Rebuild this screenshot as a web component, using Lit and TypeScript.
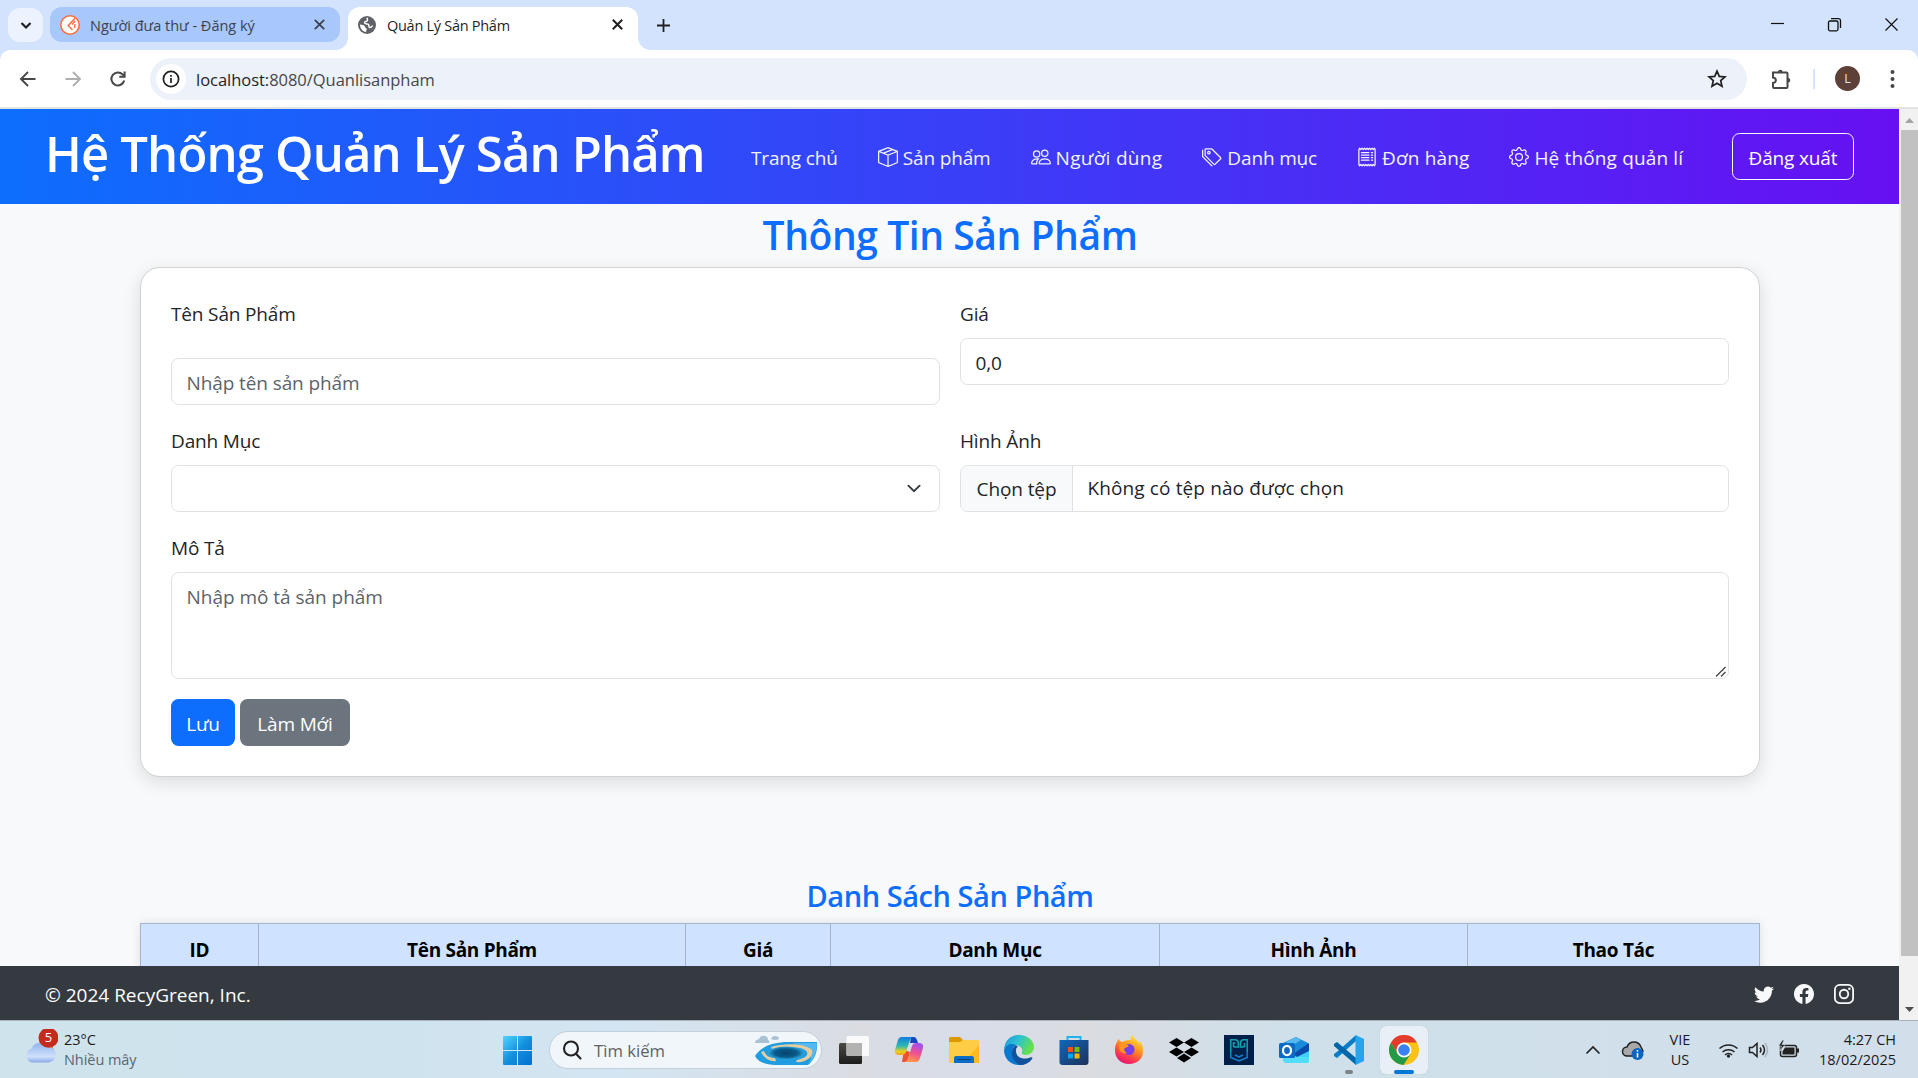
import { LitElement, html, css, svg } from "lit";
import { customElement } from "lit/decorators.js";
import { classMap } from "lit/directives/class-map.js";

const bi = (body: unknown) => html`<svg class="bi" viewBox="0 0 16 16" fill="currentColor">${body}</svg>`;

const icons = {
  box: bi(svg`<path d="M8.186 1.113a.5.5 0 0 0-.372 0L1.846 3.5l2.404.961L10.404 2l-2.218-.887zm3.564 1.426L5.596 5 8 5.961 14.154 3.5l-2.404-.961zm3.25 1.7-6.5 2.6v7.922l6.5-2.6V4.24zM7.5 14.762V6.838L1 4.239v7.923l6.5 2.6zM7.443.184a1.5 1.5 0 0 1 1.114 0l7.129 2.852A.5.5 0 0 1 16 3.5v8.662a1 1 0 0 1-.629.928l-7.185 2.874a.5.5 0 0 1-.372 0L.63 13.09a1 1 0 0 1-.63-.928V3.5a.5.5 0 0 1 .314-.464L7.443.184z"/>`),
  people: bi(svg`<path d="M15 14s1 0 1-1-1-4-5-4-5 3-5 4 1 1 1 1zm-7.978-1L7 12.996c.001-.264.167-1.03.76-1.72C8.312 10.629 9.282 10 11 10c1.717 0 2.687.63 3.24 1.276.593.69.758 1.457.76 1.72l-.008.002-.014.002zM11 7a2 2 0 1 0 0-4 2 2 0 0 0 0 4m3-2a3 3 0 1 1-6 0 3 3 0 0 1 6 0M6.936 9.28a6 6 0 0 0-1.23-.247A7 7 0 0 0 5 9c-4 0-5 3-5 4q0 1 1 1h4.216A2.24 2.24 0 0 1 5 13c0-1.01.377-2.042 1.09-2.904.243-.294.526-.569.846-.816M4.92 10A5.5 5.5 0 0 0 4 13H1c0-.26.164-1.03.76-1.724.545-.636 1.492-1.256 3.16-1.275ZM1.5 5.5a3 3 0 1 1 6 0 3 3 0 0 1-6 0m3-2a2 2 0 1 0 0 4 2 2 0 0 0 0-4"/>`),
  tags: bi(svg`<path d="M3 2v4.586l7 7L14.586 9l-7-7zM2 2a1 1 0 0 1 1-1h4.586a1 1 0 0 1 .707.293l7 7a1 1 0 0 1 0 1.414l-4.586 4.586a1 1 0 0 1-1.414 0l-7-7A1 1 0 0 1 2 6.586z"/><path d="M5.500 5a.5.5 0 1 1 0-1 .5.5 0 0 1 0 1m0 1a1.500 1.500 0 1 0 0-3 1.500 1.500 0 0 0 0 3M1 7.086a1 1 0 0 0 .293.707L8.750 15.250l-.043.043a1 1 0 0 1-1.414 0l-7-7A1 1 0 0 1 0 7.586V3a1 1 0 0 1 1-1z"/>`),
  receipt: bi(svg`<path d="M1.500 2 2 1l1 1 1-1 1 1 1-1 1 1 1-1 1 1 1-1 1 1 1-1 1 1 1-1 .5 1v12l-.5 1-1-1-1 1-1-1-1 1-1-1-1 1-1-1-1 1-1-1-1 1-1-1-1 1-.5-1z" fill="none" stroke="currentColor" stroke-linejoin="round"/><path d="M3.500 4.500h6m-6 2h6m-6 2h6m-6 2h6m2-6h1m-1 2h1m-1 2h1m-1 2h1" fill="none" stroke="currentColor" stroke-linecap="round"/>`),
  gear: bi(svg`<path d="M8 4.754a3.246 3.246 0 1 0 0 6.492 3.246 3.246 0 0 0 0-6.492M5.754 8a2.246 2.246 0 1 1 4.492 0 2.246 2.246 0 0 1-4.492 0"/><path d="M9.796 1.343c-.527-1.79-3.065-1.79-3.592 0l-.094.319a.873.873 0 0 1-1.255.52l-.292-.16c-1.64-.892-3.433.902-2.54 2.541l.159.292a.873.873 0 0 1-.52 1.255l-.319.094c-1.79.527-1.79 3.065 0 3.592l.319.094a.873.873 0 0 1 .52 1.255l-.16.292c-.892 1.64.901 3.434 2.541 2.54l.292-.159a.873.873 0 0 1 1.255.52l.094.319c.527 1.79 3.065 1.79 3.592 0l.094-.319a.873.873 0 0 1 1.255-.52l.292.16c1.64.893 3.434-.902 2.54-2.541l-.159-.292a.873.873 0 0 1 .52-1.255l.319-.094c1.79-.527 1.79-3.065 0-3.592l-.319-.094a.873.873 0 0 1-.52-1.255l.16-.292c.893-1.64-.902-3.433-2.541-2.54l-.292.159a.873.873 0 0 1-1.255-.52zm-2.633.283c.246-.835 1.428-.835 1.674 0l.094.319a1.873 1.873 0 0 0 2.693 1.115l.291-.16c.764-.415 1.6.42 1.184 1.185l-.159.292a1.873 1.873 0 0 0 1.116 2.692l.318.094c.835.246.835 1.428 0 1.674l-.319.094a1.873 1.873 0 0 0-1.115 2.693l.16.291c.415.764-.42 1.6-1.185 1.184l-.291-.159a1.873 1.873 0 0 0-2.693 1.116l-.094.318c-.246.835-1.428.835-1.674 0l-.094-.319a1.873 1.873 0 0 0-2.692-1.115l-.292.16c-.764.415-1.6-.42-1.184-1.185l.159-.291A1.873 1.873 0 0 0 1.945 8.93l-.319-.094c-.835-.246-.835-1.428 0-1.674l.319-.094A1.873 1.873 0 0 0 3.06 4.377l-.16-.292c-.415-.764.42-1.6 1.185-1.184l.292.159a1.873 1.873 0 0 0 2.692-1.115z"/>`),
  twitter: bi(svg`<path d="M5.026 15c6.038 0 9.341-5.003 9.341-9.334q.002-.211-.006-.422A6.7 6.7 0 0 0 16 3.542a6.7 6.7 0 0 1-1.889.518 3.3 3.3 0 0 0 1.447-1.817 6.5 6.5 0 0 1-2.087.793A3.286 3.286 0 0 0 7.875 6.03a9.32 9.32 0 0 1-6.767-3.429 3.29 3.29 0 0 0 1.018 4.382A3.3 3.3 0 0 1 .64 6.575v.045a3.29 3.29 0 0 0 2.632 3.218 3.2 3.2 0 0 1-.865.115 3 3 0 0 1-.614-.057 3.28 3.28 0 0 0 3.067 2.277A6.6 6.6 0 0 1 .78 13.58a6 6 0 0 1-.78-.045A9.34 9.34 0 0 0 5.026 15"/>`),
  facebook: bi(svg`<path d="M16 8.049c0-4.446-3.582-8.05-8-8.05C3.58 0-.002 3.603-.002 8.05c0 4.017 2.926 7.347 6.75 7.951v-5.625h-2.03V8.05H6.75V6.275c0-2.017 1.195-3.131 3.022-3.131.876 0 1.791.157 1.791.157v1.98h-1.009c-.993 0-1.303.621-1.303 1.258v1.51h2.218l-.354 2.326H9.25V16c3.824-.604 6.75-3.934 6.75-7.951"/>`),
  instagram: bi(svg`<g fill="none" stroke="currentColor" stroke-width="1.45"><rect x=".72" y=".72" width="14.56" height="14.56" rx="4"/><circle cx="8" cy="8" r="3.4"/></g><circle cx="12.3" cy="3.7" r="1"/>`),
};

@customElement("browser-chrome")
class BrowserChrome extends LitElement {
  static styles = css`
    :host { display: block; height: 109px; background: #d3e3fd; font-family: "Open Sans", "Noto Sans", sans-serif; color: #1f1f1f; box-sizing: border-box; }
    svg { display: block; flex: none; fill: none; stroke: currentColor; }
    .strip { display: flex; height: 50px; box-sizing: border-box; padding: 7px 20px 0 8px; }
    .search { width: 35px; height: 34px; margin-top: 1px; border-radius: 12px; background: #ecf3fe; display: grid; place-items: center; margin-right: 7px; }
    .tab { width: 290px; height: 35px; box-sizing: border-box; border-radius: 12px; display: flex; align-items: center; padding: 0 13px 0 10px; font-size: 14.5px; white-space: nowrap; }
    .tab .name { flex: 1; letter-spacing: 0; padding-top: 1px; }
    .idle { background: #a8c7fa; color: #3c4350; }
    .idle .name { margin-left: 10px; }
    .active { position: relative; margin-left: 8px; height: 43px; padding-bottom: 8px; background: #fff; border-radius: 12px 12px 0 0; }
    .active .name { margin-left: 11px; letter-spacing: -0.28px; }
    .active::before, .active::after { content: ""; position: absolute; bottom: 0; width: 12px; height: 12px; }
    .active::before { left: -12px; background: radial-gradient(circle at 0 0, transparent 11.5px, #fff 12px); }
    .active::after { right: -12px; background: radial-gradient(circle at 100% 0, transparent 11.5px, #fff 12px); }
    .plus { margin: 10.5px 0 0 17.5px; }
    .window { margin: 10px -1px 0 auto; display: flex; gap: 42px; color: #111; }
    .bar { height: 57px; background: #fff; border-radius: 10px 10px 0 0; border-bottom: 2px solid #e1e3e1; display: flex; align-items: center; padding: 0 15px 0 18px; box-sizing: content-box; }
    .bar .nav { display: flex; gap: 25px; color: #474747; }
    .bar .off { color: #aeaeae; }
    .omni { flex: 1; height: 42px; margin-left: 22px; border-radius: 21px; background: #ecf1fa; display: flex; align-items: center; padding: 0 20px 0 6px; font-size: 16.5px; }
    .info { width: 30px; height: 30px; border-radius: 50%; background: #fff; display: grid; place-items: center; }
    .url { margin-left: 10px; flex: 1; letter-spacing: -0.03px; color: #474747; padding-top: 1px; }
    .host { color: #1f1f1f; }
    .ext { margin-left: 23px; color: #474747; }
    .rule { width: 2px; height: 20px; background: #d3e3fd; margin-left: 21px; }
    .avatar { width: 25px; height: 25px; border-radius: 50%; background: #5d4037; color: #efe3df; font-size: 12.5px; display: grid; place-items: center; margin: 0 23px 0 20.5px; }
  `;
  render() {
    const cross = (w: number) => html`<svg width="15" height="15" viewBox="0 0 15 15" stroke-width=${w}><path d="M2.8 2.8l9.4 9.4M12.2 2.8l-9.4 9.4"/></svg>`;
    return html`
      <div class="strip">
        <div class="search"><svg width="14" height="14" viewBox="0 0 14 14" stroke-width="2.2"><path d="M2.500 5 7 9.500 11.500 5"/></svg></div>
        <div class="tab idle">
          <svg width="20" height="20" viewBox="0 0 20 20"><circle cx="10" cy="10" r="9.2" fill="#fff" stroke="#ff6c37" stroke-width="1.5"/><path d="M15 3.200 8.200 10.500l4.300 4.500M12 9.500l3-3.500M14.800 9v4" stroke="#ff6c37" stroke-width="1.4"/></svg>
          <span class="name">Người đưa thư - Đăng ký</span>${cross(1.8)}
        </div>
        <div class="tab active">
          <svg width="18" height="18" viewBox="0 0 18 18"><circle cx="9" cy="9" r="9" fill="#5f6368" stroke="none"/><path d="M9.500 1.800c-1 1.400.8 2-.4 3-1.200.9-2.600.4-2.500 2 .1 1.400 2.200.9 3.400 1.300 1.500.6.3 2.300 1.300 3.200 1 .8 2.400-.6 3.300-1.700" stroke="#fff" stroke-width="1.500"/><path d="M2 8.500c2 .3 3.500.4 4.500 1.500s.8 1.800 1.900 2.500c.8.6-.2 2-.3 3.400C4.500 15.500 2 12.500 2 8.500z" fill="#fff" stroke="none"/></svg>
          <span class="name">Quản Lý Sản Phẩm</span>${cross(2)}
        </div>
        <svg class="plus" width="15" height="15" viewBox="0 0 15 15" stroke-width="1.800"><path d="M7.500 1v13M1 7.500h13"/></svg>
        <div class="window">
          <svg width="15" height="15" viewBox="0 0 15 15" stroke-width="1.200"><path d="M1 6.500h13"/></svg>
          <svg width="15" height="15" viewBox="0 0 15 15" stroke-width="1.300"><rect x="1.500" y="4" width="9.500" height="9.800" rx="1.500"/><path d="M4 1.600h7.500a2 2 0 0 1 2 2V11"/></svg>
          <svg width="15" height="15" viewBox="0 0 15 15" stroke-width="1.200"><path d="M1.500 1.500l12 12M13.500 1.500l-12 12"/></svg>
        </div>
      </div>
      <div class="bar">
        <div class="nav">
          <svg width="20" height="20" viewBox="0 0 20 20" stroke-width="1.900"><path d="M17.500 10H3.500M10 3 3 10l7 7"/></svg>
          <svg class="off" width="20" height="20" viewBox="0 0 20 20" stroke-width="1.900"><path d="M2.500 10h14M10 3l7 7-7 7"/></svg>
          <svg width="20" height="20" viewBox="0 0 20 20" stroke-width="2"><path d="M16.200 11.500A6.500 6.500 0 1 1 14.600 5.400L16.500 7.300"/><path d="M16.600 2.500V7.800h-5.300"/></svg>
        </div>
        <div class="omni">
          <div class="info"><svg width="18" height="18" viewBox="0 0 18 18" stroke-width="1.700"><circle cx="9" cy="9" r="7.600"/><path d="M9 8v5M9 5v1.700"/></svg></div>
          <div class="url"><span class="host">localhost:</span>8080/Quanlisanpham</div>
          <svg width="20" height="20" viewBox="0 0 20 20" stroke-width="1.700"><path d="M10 2.200l2.300 5.200 5.700.5-4.300 3.700 1.300 5.600-5-3-5 3 1.300-5.600L2 7.900l5.700-.5z"/></svg>
        </div>
        <svg class="ext" width="22" height="22" viewBox="0 0 22 22" stroke-width="2"><path d="M3 4.500h13.500a1 1 0 0 1 1 1V19a1 1 0 0 1-1 1H4a1 1 0 0 1-1-1v-4c3.800-.5 3.800-5 0-5.500z"/><path d="M8 4a2.300 2.300 0 0 1 4.600 0zM18 10a2.300 2.300 0 0 1 0 4.600z" fill="currentColor" stroke="none"/></svg>
        <div class="rule"></div>
        <div class="avatar">L</div>
        <svg width="20" height="20" viewBox="0 0 20 20"><g fill="#474747" stroke="none"><circle cx="9.500" cy="3" r="2"/><circle cx="9.500" cy="10" r="2"/><circle cx="9.500" cy="17" r="2"/></g></svg>
      </div>`;
  }
}

@customElement("product-page")
class ProductPage extends LitElement {
  static styles = css`
    :host { display: flex; height: 911px; background: #f8f9fa; color: #212529; font: 19px/30px "Open Sans", "Noto Sans", sans-serif; letter-spacing: -0.15px; }
    .bi { width: 20px; height: 20px; display: block; flex: none; }
    .page { flex: 1; display: flex; flex-direction: column; min-width: 0; }
    .top { height: 95px; flex: none; display: flex; align-items: center; color: #fff; background: linear-gradient(90deg, #0d6efd, #6610f2); padding: 0 45px; box-sizing: border-box; white-space: nowrap; }
    .brand { width: 686px; font-size: 49px; line-height: 60px; font-weight: 600; letter-spacing: -0.84px; padding-bottom: 8px; }
    .links { display: flex; flex: 1; gap: 40px; padding: 2px 0 0 20px; color: #f3f4fd; }
    .link { display: flex; gap: 5px; }
    .link.wide { letter-spacing: 0.15px; }
    .link.widest { letter-spacing: 0.3px; }
    .link .bi { margin-top: 4px; }
    .logout { width: 122px; height: 47px; box-sizing: border-box; border: 1px solid #f8f9fa; border-radius: 7.5px; text-align: center; line-height: 48px; }
    .main { flex: 1; min-height: 0; overflow: hidden; padding: 0 139px 0 140px; }
    h2 { margin: 0; color: #0d6efd; text-align: center; font-weight: 600; font-size: 39px; line-height: 48px; letter-spacing: -0.42px; padding: 7px 0 8px; }
    .card { height: 510px; box-sizing: border-box; border: 1px solid #d1d2d3; border-radius: 20px; background: #fff; box-shadow: 0 5px 18px rgba(0, 0, 0, 0.12); padding: 30px; }
    .grid { display: grid; grid-template-columns: 769px 769px; column-gap: 20px; }
    label { display: block; height: 30px; margin-bottom: 10px; padding-top: 1px; box-sizing: border-box; }
    .field { height: 107px; }
    .field.low label { margin-bottom: 30px; }
    .row1 { height: 127px; }
    .box { display: flex; align-items: center; width: 100%; height: 47px; box-sizing: border-box; border: 1px solid #dee2e6; border-radius: 7.5px; background: #fff; padding: 2px 14.5px 0; font: inherit; letter-spacing: -0.1px; color: inherit; outline: none; }
    .box::placeholder { color: #5c636a; opacity: 1; }
    .select { justify-content: flex-end; padding: 0 15px; }
    .file { padding: 0; overflow: hidden; line-height: 49px; }
    .pick { width: 111px; height: 47px; background: #f8f9fa; border-right: 1px solid #dee2e6; text-align: center; flex: none; }
    .none { margin-left: 14.5px; letter-spacing: 0.12px; }
    .area { position: relative; }
    .grip { position: absolute; right: 2px; bottom: 1px; width: 12px; height: 12px; }
    textarea.box { display: block; height: 107px; padding: 9px 14.5px; resize: none; letter-spacing: -0.03px; }
    .actions { display: flex; gap: 5px; margin-top: 20px; color: #fff; text-align: center; line-height: 50px; }
    .btn { height: 47px; border-radius: 7.5px; }
    .save { width: 64px; background: #0d6efd; }
    .reset { width: 110px; background: #6c757d; }
    h3 { margin: 99px 0 0; color: #0d6efd; text-align: center; font-weight: 600; font-size: 29px; line-height: 36px; letter-spacing: -0.45px; padding: 2px 0 9px; }
    .table { display: grid; grid-template-columns: 117px 427px 145px 329px 308px 1fr; border: solid #a6b5cc; border-width: 1px 1px 0; background: #cfe2ff; box-shadow: 0 0 10px rgba(0, 0, 0, 0.1); color: #000; font-weight: 700; text-align: center; letter-spacing: -0.3px; }
    .th { height: 60px; padding-top: 11px; box-sizing: border-box; border-left: 1px solid #a6b5cc; }
    .th:first-child { border-left: 0; }
    .foot { position: relative; flex: none; height: 54px; background: #343a40; color: #fff; display: flex; align-items: center; justify-content: space-between; padding: 3px 45px 0 45px; box-sizing: border-box; letter-spacing: 0; }
    .social { display: flex; gap: 20px; color: #f8f9fa; padding-bottom: 1px; }
    .scroll { width: 19px; flex: none; background: #f1f1f1; display: flex; flex-direction: column; align-items: flex-end; justify-content: space-between; }
    .scroll svg { width: 17px; height: 21px; display: block; flex: none; }
    .thumb { width: 17px; height: 826px; background: #c1c1c1; }
    .room { flex: 1; }
  `;
  private links = [
    { text: "Trang chủ", icon: null, fit: "" },
    { text: "Sản phẩm", icon: icons.box, fit: "" },
    { text: "Người dùng", icon: icons.people, fit: "widest" },
    { text: "Danh mục", icon: icons.tags, fit: "" },
    { text: "Đơn hàng", icon: icons.receipt, fit: "wide" },
    { text: "Hệ thống quản lí", icon: icons.gear, fit: "wide" },
  ];
  private heads = ["ID", "Tên Sản Phẩm", "Giá", "Danh Mục", "Hình Ảnh", "Thao Tác"];
  render() {
    return html`
      <div class="page">
        <div class="top">
          <div class="brand">Hệ Thống Quản Lý Sản Phẩm</div>
          <div class="links">${this.links.map((l) => html`<div class=${classMap({ link: true, wide: l.fit === "wide", widest: l.fit === "widest" })}>${l.icon}<span>${l.text}</span></div>`)}</div>
          <div class="logout">Đăng xuất</div>
        </div>
        <div class="main">
          <h2>Thông Tin Sản Phẩm</h2>
          <div class="card">
            <div class="grid">
              <div class="field row1 low"><label>Tên Sản Phẩm</label><input class="box" placeholder="Nhập tên sản phẩm" /></div>
              <div class="field row1"><label>Giá</label><input class="box" .value=${"0,0"} /></div>
              <div class="field"><label>Danh Mục</label><div class="box select"><svg width="20" height="15" viewBox="0 0 16 12" fill="none" stroke="#343a40" stroke-width="1.500" stroke-linecap="round"><path d="M3.500 3.700 8 8.200l4.500-4.500"/></svg></div></div>
              <div class="field"><label>Hình Ảnh</label><div class="box file"><span class="pick">Chọn tệp</span><span class="none">Không có tệp nào được chọn</span></div></div>
            </div>
            <label>Mô Tả</label>
            <div class="area">
              <textarea class="box" placeholder="Nhập mô tả sản phẩm"></textarea>
              <svg class="grip" viewBox="0 0 12 12" stroke="#444" stroke-width="1.300"><path d="M1 10.500 10.500 1M6 10.500 10.500 6"/></svg>
            </div>
            <div class="actions"><div class="btn save">Lưu</div><div class="btn reset">Làm Mới</div></div>
          </div>
          <h3>Danh Sách Sản Phẩm</h3>
          <div class="table">${this.heads.map((h) => html`<div class="th">${h}</div>`)}</div>
        </div>
        <div class="foot"><span>© 2024 RecyGreen, Inc.</span><div class="social">${icons.twitter}${icons.facebook}${icons.instagram}</div></div>
      </div>
      <div class="scroll">
        <svg viewBox="0 0 17 21"><path d="M4 14 8.500 9l4.500 5z" fill="#a3a3a3"/></svg>
        <div class="thumb"></div><div class="room"></div>
        <svg viewBox="0 0 17 21"><path d="M4 8l4.500 5L13 8z" fill="#505050"/></svg>
      </div>`;
  }
}

const art = (body: unknown, w = 30) => html`<svg width=${w} height=${w} viewBox="0 0 30 30">${body}</svg>`;

@customElement("task-bar")
class TaskBar extends LitElement {
  static styles = css`
    :host { display: flex; height: 58px; box-sizing: border-box; border-top: 1px solid #a9b3bd; background: linear-gradient(90deg, #cfe3ed 0, #cfe3ee 400px, #d3e5f2 620px, #dadce2 860px, #d8dde9 980px, #dadce0 1090px, #cfe0ea 1290px, #d2dfeb 1918px); font: 14.5px/20px "Open Sans", "Noto Sans", sans-serif; color: #1b1b1b; white-space: nowrap; }
    svg { display: block; flex: none; }
    .weather { width: 503px; box-sizing: border-box; padding: 8px 0 0 24px; display: flex; gap: 6px; }
    .cond { padding-top: 0.5px; }
    .badge { fill: #fff; font: 13px "Open Sans", sans-serif; text-anchor: middle; }
    .muted { color: #5b6670; letter-spacing: -0.05px; }
    .start { margin-top: 15px; }
    .search { width: 273px; height: 38px; box-sizing: border-box; margin: 10px 4.5px 0 17px; border: 1px solid #c3cfda; border-radius: 19px; background: #f1f6fa; display: flex; align-items: center; padding: 0 3px 0 12px; font-size: 16.7px; color: #5f6165; }
    .search span { flex: 1; margin-left: 12px; padding-top: 1px; }
    .app { width: 55px; height: 57px; display: flex; justify-content: center; padding-top: 14px; box-sizing: border-box; position: relative; }
    .tile { width: 48px; height: 48px; margin: 5px 3.5px; padding-top: 9px; background: #e9eff6; border-radius: 6px; box-shadow: 0 0 1px #a9b5c0; }
    .mark { position: absolute; bottom: 4px; width: 8px; height: 4px; border-radius: 2px; background: #7d8489; }
    .tile .mark { bottom: 0; width: 20px; background: #0078d4; }
    .tray { margin-left: auto; display: flex; align-items: center; padding-right: 22px; }
    .tray > * { flex: none; }
    .lang { width: 40px; text-align: center; margin: 0 18px 0 13px; }
    .clock { width: 84px; text-align: right; margin-left: 10px; }
  `;
  render() {
    return html`
      <div class="weather">
        <svg width="34" height="40" viewBox="0 0 34 40"><defs><linearGradient id="cl" x1="0" y1="0" x2="0" y2="1"><stop offset="0" stop-color="#8fb4ee"/><stop offset=".7" stop-color="#cfe0fb"/><stop offset="1" stop-color="#8aa9e6"/></linearGradient></defs><circle cx="24.500" cy="20.500" r="5" fill="#f57c1f"/><path d="M8 33.500a7.300 7.300 0 0 1-.5-14A8.500 8.500 0 0 1 22.500 17.500a8 8 0 0 1 2.500 16z" fill="url(#cl)"/><circle cx="24.500" cy="8.800" r="10" fill="#c42b1c"/><text class="badge" x="24.500" y="13.300">5</text></svg>
        <div class="cond"><div>23°C</div><div class="muted">Nhiều mây</div></div>
      </div>
      <svg class="start" width="29" height="29" viewBox="0 0 29 29"><defs><linearGradient id="w" x1="0" y1="0" x2="1" y2="1"><stop offset="0" stop-color="#4fd4ff"/><stop offset=".5" stop-color="#1490df"/><stop offset="1" stop-color="#0070d0"/></linearGradient></defs><path d="M1 0h13v14H0V1a1 1 0 0 1 1-1zM15 0h13a1 1 0 0 1 1 1v13H15zM0 15h14v14H1a1 1 0 0 1-1-1zM15 15h14v13a1 1 0 0 1-1 1H15z" fill="url(#w)"/></svg>
      <div class="search">
        <svg width="20" height="20" viewBox="0 0 20 20" fill="none" stroke="#222" stroke-width="2.100" stroke-linecap="round"><circle cx="9" cy="8.500" r="7"/><path d="M14 13.800 18.500 18.500"/></svg>
        <span>Tìm kiếm</span>
        <svg width="64" height="32" viewBox="0 0 64 32"><defs><radialGradient id="hole"><stop offset="0" stop-color="#05446e"/><stop offset=".65" stop-color="#0a5c8c"/><stop offset="1" stop-color="#2aa5dc"/></radialGradient></defs><path d="M1 9q0-3 4-4 2-4 5-3 4 0 4 4 2 1 1 3zM17 5q1-3 4-3 4 0 4 3-4 2-8 0z" fill="#a9c2d3"/><path d="M1 22C8 10 25 8 34 8h29c.500 8-1 16-9 23H22C12 31 4 28 1 22z" fill="#1f9de0"/><path d="M38 9h25q0 12-8 21 6-14-5-18z" fill="#56b8f0"/><path d="M7 18c4 8 11 10 15 9l-1-3c-5 0-9-2-11-7zM17 13c12-4 34-4 41 3 2 8-8 13-16 12 0-3 6-3 9-5 4-3 3-7-5-9-8-1-19 0-28 1z" fill="#e5cda0"/><ellipse cx="32" cy="19" rx="18" ry="6.500" fill="url(#hole)"/></svg>
      </div>
      <div class="app">${art(svg`<defs><linearGradient id="tv" x1="0" y1="0" x2="0" y2="1"><stop offset="0" stop-color="#4a4a46"/><stop offset="1" stop-color="#1c1c1a"/></linearGradient></defs><rect x="0" y="8" width="23" height="21" rx="1.500" fill="url(#tv)"/><rect x="7.500" y="1" width="22.500" height="20" rx="1.500" fill="#fafafa"/><path d="M7.500 8H23v13H9a1.500 1.500 0 0 1-1.500-1.500z" fill="#b2b2b0"/>`)}</div>
      <div class="app">${art(svg`<defs><linearGradient id="c1" x1="0" y1="0" x2="0" y2="1"><stop offset="0" stop-color="#0f7ee0"/><stop offset=".5" stop-color="#2fb8b0"/><stop offset=".8" stop-color="#e8d020"/><stop offset="1" stop-color="#f7a020"/></linearGradient><linearGradient id="c2" x1=".6" y1="0" x2=".3" y2="1"><stop offset="0" stop-color="#a050f0"/><stop offset=".5" stop-color="#f05090"/><stop offset="1" stop-color="#ff9b45"/></linearGradient></defs><path d="M17 2h3q2 0 3 3l1 3h-8z" fill="#1747c0"/><path d="M8 27h3q2 0 3-3l2-7-6-2z" fill="#ee5030"/><path d="M8 2h11q-2 0-3 3l-4 12q-1 3-4 3H4q-4-1-3-5L4 5q1-3 4-3z" fill="url(#c1)"/><path d="M22 27H11q2 0 3-3l4-13q1-3 4-3h4q4 1 3 5l-3 10q-1 4-4 4z" fill="url(#c2)"/>`)}</div>
      <div class="app">${art(svg`<path d="M1 2h10l3 3v4H0V3z" fill="#dc9900"/><path d="M14 5h15a1 1 0 0 1 1 1v22H0V7h11z" fill="#ffcd45"/><path d="M30 10v18H14z" fill="#fdbb1d"/><path d="M5 28v-5q0-2 2-2h16q2 0 2 2v5z" fill="#0c6dc4"/><path d="M8.500 24.500h13" stroke="#08427c"/>`)}</div>
      <div class="app">${art(svg`<defs><linearGradient id="e1" x1="0" y1="0" x2="1" y2=".4"><stop offset="0" stop-color="#1a8fdc"/><stop offset=".5" stop-color="#2cc3d2"/><stop offset="1" stop-color="#66e04a"/></linearGradient></defs><path d="M0 14C1 5 7 0 15 0c9 0 15 6 15 12 0 5-4 8-9 8-3 0-4-1-3-3 1-3-1-6-6-7C7 9 2 10 0 14z" fill="url(#e1)"/><path d="M0 15c2-6 8-7 12-5-3 2-4 5-3 8 2 6 8 8 14 6 3-1 5-2 4 0-3 4-7 6-12 6C6 30 0 23 0 15z" fill="#0a78ce"/><path d="M12 10c-6 4-6 15 4 20 5 0 9-2 12-6 1-2 0-2-3-1-7 2-13-1-13-7 0-1 0-4 2-4z" fill="#12529c"/><path d="M14 12c-2 4 1 9 8 10 2 0 4-.4 6-1l2-3c-3 2-7 2.500-9 2-3-.3-4-1.500-3-3.500.6-2-1-5-4-4.500z" fill="#d6dde8"/>`)}</div>
      <div class="app">${art(svg`<defs><linearGradient id="s1" x1="0" y1="0" x2="1" y2="1"><stop offset="0" stop-color="#0f68bd"/><stop offset="1" stop-color="#1f3059"/></linearGradient></defs><path d="M8.500 6V2h13v4" fill="none" stroke="#20b4ee" stroke-width="2"/><path d="M.5 5h29v22q0 3-3 3h-23q-3 0-3-3z" fill="url(#s1)"/><path d="M9 12h5v5H9z" fill="#f25022"/><path d="M15.500 12h5v5h-5z" fill="#7fba00"/><path d="M9 18.500h5v5H9z" fill="#00a4ef"/><path d="M15.500 18.500h5v5h-5z" fill="#ffb900"/>`)}</div>
      <div class="app">${art(svg`<defs><linearGradient id="f1" x1=".8" y1="0" x2=".3" y2="1"><stop offset="0" stop-color="#fff04a"/><stop offset=".4" stop-color="#ff9a1f"/><stop offset=".75" stop-color="#ff3b4e"/><stop offset="1" stop-color="#e0127c"/></linearGradient></defs><path d="M2 9c1-2 1-3 3-5 0 2 2 3 4 3 2-2 5-2 8-2-1-2 0-4 2-5 0 4 4 4 7 9 0-1 0-2-.5-3C29 9 29 13 29 16c0 8-6 13-14 13S1 23 1 16c0-3 0-5 1-7z" fill="url(#f1)"/><circle cx="15" cy="14.500" r="5.500" fill="#7a3fe0"/><path d="M5 9c3-1 6 0 9 1 2 1-1 2-3 3s0 4 2 5c-5 2-9-3-8-9z" fill="#ff9420"/>`)}</div>
      <div class="app">${art(svg`<path d="M7.500 3 15 7.500 7.500 12 0 7.500zM22.500 3 30 7.500 22.500 12 15 7.500zM7.500 12.500 15 17l-7.500 4.500L0 17zM22.500 12.500 30 17l-7.500 4.500L15 17zM15 18.500l7 4.500-7 4.500L8 23z" fill="#000"/>`)}</div>
      <div class="app">${art(svg`<path d="M0 0h30v30H0z" fill="#00204a"/><path d="M6.800 17V4.800H11q3.300 0 3.300 3.700V12H9.500M20.500 12h-4V8.500q0-3.700 3.300-3.700h3.400V17M9.500 12V8h2M20.500 12V8" fill="none" stroke="#14a3ae" stroke-width="1.500"/><path d="M6.800 16.500v6l8.200 3.500 8.200-3.500v-6M11 20l4 2 4-2" fill="none" stroke="#167fd0" stroke-width="1.500"/>`)}</div>
      <div class="app">${art(svg`<path d="M4 8 17 2l12 6v8L10 20z" fill="#198bd8"/><path d="M7 7 17 2l5 3-14 9z" fill="#57b6ee"/><path d="M30 9v16q0 3-3 3H9q-4 0-4-3z" fill="#40d0f4"/><path d="M14 19 30 8v8L18 22z" fill="#0a4ca8"/><path d="M4 22l26 0v3q0 3-3 3H8q-4 0-4-3z" fill="#52dcf8"/><rect x="0" y="8" width="16" height="15" rx="1.500" fill="#0a6ac8"/><ellipse cx="8" cy="15.500" rx="4" ry="4.600" fill="none" stroke="#fff" stroke-width="2.200"/>`)}</div>
      <div class="app">${art(svg`<path d="M22 0 4 16l-4 3v2l3 2 19-17z" fill="#0a7cc8"/><path d="M0 9l3-2 19 16v7L0 11z" fill="#0065a9"/><path d="M21.500 0 30 4v22l-8.500 4z" fill="#27a4ee"/>`)}<span class="mark"></span></div>
      <div class="app tile">${art(svg`<circle cx="15" cy="15" r="15" fill="#fbc116"/><path d="M2 7.500A15 15 0 0 1 28 7.500H15L8.500 18.500z" fill="#e33b2e"/><path d="M2 7.500a15 15 0 0 0 12.500 22.500L21.500 19l-13-.5z" fill="#229a48"/><circle cx="15" cy="15" r="7.500" fill="#fff"/><circle cx="15" cy="15" r="5.800" fill="#3a80f0"/>`)}<span class="mark"></span></div>
      <div class="tray">
        <svg width="16" height="16" viewBox="0 0 16 16" fill="none" stroke="#222" stroke-width="1.700" stroke-linecap="round"><path d="M2 11l6-6 6 6"/></svg>
        <svg width="46" height="24" viewBox="0 0 46 24"><path d="M26 18a4.500 4.500 0 0 1 0-9q2-5 7-5t7 5l2 4-5 5z" fill="#a9a9a9" stroke="#222" stroke-width="1.500"/><circle cx="36.500" cy="16" r="6" fill="#0a65c2"/><path d="M36.500 15v4.500M36.500 12v1.700" stroke="#fff" stroke-width="1.600"/></svg>
        <div class="lang">VIE<br />US</div>
        <svg width="84" height="24" viewBox="0 0 84 24" fill="none" stroke="#222" stroke-width="1.500"><path d="M1.500 10.500a13 13 0 0 1 18 0M4.500 14a9 9 0 0 1 12 0M7 17a5 5 0 0 1 7 0" /><circle cx="10.500" cy="18" r="1.700" fill="#222" stroke="none"/><path d="M31.500 9.500h3L39 5.500v13l-4.500-4h-3zM42 9.500q2 2.500 0 5M44.500 7q4 5 0 10"/><path d="M47 5q5 7 0 14" stroke="#aab4bc"/><rect x="62.500" y="7.500" width="16" height="11" rx="2"/><path d="M67 9.500h9.500v7H64.500v-3zM79 10.500h2v4h-2z" fill="#222" stroke="none"/><path d="M64.500 2l-4 6h3l-1.500 5 5-6.500h-3l2-4.500z" fill="#222" stroke="#d2dfeb" stroke-width=".6"/></svg>
        <div class="clock">4:27 CH<br />18/02/2025</div>
      </div>`;
  }
}

@customElement("app-root")
class AppRoot extends LitElement {
  static styles = css`:host { display: block; width: 1918px; height: 1078px; overflow: hidden; }`;
  render() {
    return html`<browser-chrome></browser-chrome><product-page></product-page><task-bar></task-bar>`;
  }
}
